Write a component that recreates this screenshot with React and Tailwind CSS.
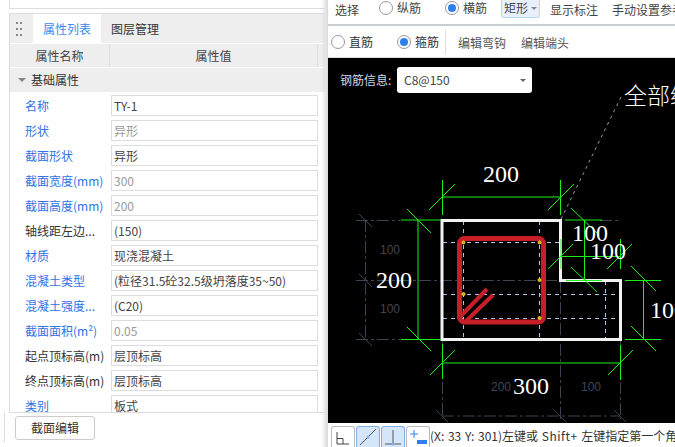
const rows = [
  { name: "名称", value: "TY-1", blue: true },
  { name: "形状", value: "异形", blue: true, muted: true },
  { name: "截面形状", value: "异形", blue: true },
  { name: "截面宽度(mm)", value: "300", blue: true, muted: true },
  { name: "截面高度(mm)", value: "200", blue: true, muted: true },
  { name: "轴线距左边...", value: "(150)" },
  { name: "材质", value: "现浇混凝土", blue: true },
  { name: "混凝土类型", value: "(粒径31.5砼32.5级坍落度35~50)", blue: true },
  { name: "混凝土强度...", value: "(C20)", blue: true },
  { name: "截面面积(m²)", value: "0.05", blue: true, muted: true },
  { name: "起点顶标高(m)", value: "层顶标高" },
  { name: "终点顶标高(m)", value: "层顶标高" },
  { name: "类别", value: "板式", blue: true },
];

function Radio({ label, checked, className = "" }) {
  return (
    <div className={`flex items-center gap-[4px] shrink-0 ${className}`}>
      <span className="w-[14px] h-[14px] rounded-full border border-[#999] bg-white flex items-center justify-center">
        {checked && <span className="w-[8px] h-[8px] rounded-full bg-[#2f80ed]" />}
      </span>
      <span>{label}</span>
    </div>
  );
}

function Grip() {
  return (
    <div className="grid grid-cols-2 gap-x-[2px] gap-y-[4px] ml-[6px] mr-[11px]">
      {[0, 1, 2, 3, 4, 5].map((i) => (
        <span key={i} className="w-[2px] h-[2px] bg-[#888]" />
      ))}
    </div>
  );
}

function PropertyPanel() {
  return (
    <div className="w-[328px] shrink-0 h-full flex flex-col bg-white relative">
      <div className="h-[9px] ml-[9px] mr-[3px] border-l border-b border-[#ddd] shrink-0" />
      <div className="h-[4px] shrink-0" />
      <div className="ml-[9px] mr-[3px] flex-1 min-h-0 border-l border-t border-b border-[#ddd] flex flex-col overflow-hidden">
        <div className="h-[29px] shrink-0 bg-[#eeeeef] flex items-center">
          <Grip />
          <div className="h-full w-[68px] bg-white text-[#3c8cf0] flex items-center justify-center">属性列表</div>
          <div className="ml-[10px] text-[#333]">图层管理</div>
        </div>
        <div className="h-[23px] shrink-0 mt-px bg-[#eeeeef] flex items-center text-[#444]">
          <div className="w-[100px] h-full border-r border-[#ddd] flex items-center justify-center">属性名称</div>
          <div className="w-[208px] h-full border-r border-[#ddd] flex items-center justify-center">属性值</div>
        </div>
        <div className="h-[24px] shrink-0 mt-px bg-[#eeeeef] flex items-center text-[#333]">
          <span className="ml-[8px] mr-[5px] w-0 h-0 border-x-[4px] border-x-transparent border-t-[4px] border-t-[#888]" />
          基础属性
        </div>
        <div className="flex flex-col pt-px">
          {rows.map((r) => (
            <div key={r.name} className="h-[25px] shrink-0 flex items-center">
              <div className={`w-[101px] pl-[15px] whitespace-nowrap ${r.blue ? "text-[#2e74e6]" : "text-[#333]"}`}>{r.name}</div>
              <div className={`w-[207px] h-[21px] border border-[#ddd] bg-white px-[2px] flex items-center whitespace-nowrap ${r.muted ? "text-[#999]" : "text-[#444]"}`}>
                {r.value}
              </div>
            </div>
          ))}
        </div>
      </div>
      <div className="h-[34px] shrink-0">
        <div className="h-[29px] ml-[4px] border-l border-[#ddd] pl-[10px] pt-[3px]">
          <button className="w-[80px] h-[24px] border border-[#ccc] rounded-[3px] bg-white text-[#333]">截面编辑</button>
        </div>
      </div>
      <div className="absolute top-0 right-0 bottom-0 w-[7px] bg-gradient-to-r from-transparent to-[#d8d8d8]" />
    </div>
  );
}

function Drawing() {
  const green = [
    "M442.5 198H560.5", "M442.5 181V216", "M560.5 181V216", "M429 211L455 185", "M548 211L574 185",
    "M418 221V340", "M401 221H441", "M401 340.5H441", "M407 210L431 234", "M407 328L431 352",
    "M565 221H602", "M584.5 221V281", "M566 281.5H602", "M571 209L597 234", "M571 268L597 293",
    "M561 257.5H620.5", "M561 240V270", "M620.5 240V270", "M548 270L573 245", "M607 270L632 245",
    "M643.5 281V340", "M625 281.5H661", "M625 340.5H661", "M631 267L656 292", "M631 327L656 352",
    "M442.5 364H620.5", "M442.5 345V380", "M620.5 346V381", "M430 376L455 351", "M608 376L633 351",
  ];
  const axes = [
    "M356 221.5H400", "M600 221.5H620", "M356 281.5H620", "M356 340.5H400", "M365.5 221V340",
    "M560.5 282V420", "M442.5 341V420", "M620.5 341V420", "M442 417H620",
  ];
  const grid = [
    "M463.5 222V340", "M539.5 222V340", "M605.5 282V340", "M443 243.5H560", "M443 295.5H620", "M443 319.5H620",
  ];
  const ticks = ["M359 215L372 228", "M359 275L372 288", "M359 334L372 347", "M436 411L449 424", "M554 411L567 424", "M614 411L627 424"];
  const dots = [[463.5, 243.5], [539.5, 243.5], [539.5, 281], [539.5, 319], [463.5, 295]];
  const dims = [[380, 255, "100"], [380, 314, "100"], [491, 392, "200"], [581, 392, "100"]];
  const labels = [[483, 183, "200"], [572, 242, "100"], [590, 260, "100"], [376, 289, "200"], [513, 395, "300"], [650, 319, "100"]];
  return (
    <svg className="absolute inset-0" width="347" height="364" viewBox="328 59 347 364" fill="none">
      <path d="M621 98L561 220" stroke="#999" strokeDasharray="3 4" />
      {axes.map((d) => <path key={d} d={d} stroke="#3a4350" strokeDasharray="12 3 3 3" />)}
      {ticks.map((d) => <path key={d} d={d} stroke="#3a4350" />)}
      {grid.map((d) => <path key={d} d={d} stroke="#a9c4e8" strokeDasharray="4 4" />)}
      <path d="M442 221.5H560.5V281.5H620.5V340.5H442Z" stroke="#f2f2f2" strokeWidth="3" />
      {green.map((d) => <path key={d} d={d} stroke="#18f018" />)}
      <rect x="459.5" y="239.5" width="84" height="83.5" rx="5" stroke="#c81e28" strokeWidth="5" />
      <path d="M458 320L487 290M465 323L493 296" stroke="#c81e28" strokeWidth="4" />
      {dots.map(([x, y]) => <circle key={`${x}-${y}`} cx={x} cy={y} r="1.5" fill="#c9a400" stroke="#f5d430" />)}
      {dims.map(([x, y, t]) => (
        <text key={`${x}-${y}`} x={x} y={y} fill="#3f4754" fontSize="12" fontFamily="Liberation Sans, sans-serif">{t}</text>
      ))}
      {labels.map(([x, y, t]) => (
        <text key={`${x}-${y}`} x={x} y={y} fill="#fff" fontSize="24" fontFamily="Liberation Serif, serif">{t}</text>
      ))}
      <text x="624" y="105" fill="#fff" fontSize="23" fontFamily="Liberation Serif, Noto Sans CJK SC, serif" fontWeight="300">全部纵筋</text>
    </svg>
  );
}

function StatusBtn({ active, children }) {
  return (
    <div className={`w-[24px] h-[21px] shrink-0 rounded-t-[3px] border border-b-0 ${active ? "bg-[#d6e6fa] border-[#7fb0ea]" : "bg-white border-[#bbb]"}`}>
      <svg width="22" height="20" viewBox="0 0 22 20" fill="none">{children}</svg>
    </div>
  );
}

function EditorPanel() {
  return (
    <div className="flex-1 min-w-0 h-full flex flex-col bg-white overflow-hidden">
      <div className="h-[24px] shrink-0 flex items-center whitespace-nowrap text-[#444] pb-[8px] overflow-hidden">
        <span className="ml-[7px] mt-[3px]">选择</span>
        <span className="w-px h-[20px] bg-[#ddd] ml-[12px] mr-[8px]" />
        <Radio label="纵筋" className="w-[66px]" />
        <Radio label="横筋" className="w-[48px]" checked />
        <span className="w-px h-[20px] bg-[#ddd] mr-[8px]" />
        <div className="w-[39px] h-[19px] mt-0 pt-[1px] shrink-0 rounded-b-[3px] border border-t-0 border-[#bcd6f5] bg-[#e8f1fb] flex items-center pl-[2px]">
          矩形
          <span className="ml-[3px] w-0 h-0 border-x-[3px] border-x-transparent border-t-[3px] border-t-[#888]" />
        </div>
        <span className="ml-[10px] mt-[3px]">显示标注</span>
        <span className="ml-[14px] mt-[3px]">手动设置参考点</span>
      </div>
      <div className="h-[2px] shrink-0 bg-[#c8cbd0]" />
      <div className="h-[32px] shrink-0 flex items-center whitespace-nowrap text-[#333] border-b border-[#ddd]">
        <Radio label="直筋" className="ml-[3px] w-[66px]" />
        <Radio label="箍筋" className="w-[48px]" checked />
        <span className="w-px h-[24px] bg-[#ddd]" />
        <span className="ml-[12px] mt-[3px] text-[#555]">编辑弯钩</span>
        <span className="ml-[15px] mt-[3px] text-[#555]">编辑端头</span>
      </div>
      <div className="relative h-[365px] shrink-0 bg-black overflow-hidden">
        <Drawing />
        <div className="relative flex items-center pl-[12px] pt-[9px]">
          <span className="w-[57px] text-[#cfd8e3] whitespace-nowrap">钢筋信息:</span>
          <div className="w-[135px] h-[26px] rounded-[3px] bg-white text-[#444] flex items-center justify-between pl-[7px] pr-[6px]">
            C8@150
            <span className="w-0 h-0 border-x-[3px] border-x-transparent border-t-[3px] border-t-[#666]" />
          </div>
        </div>
      </div>
      <div className="h-[24px] shrink-0 flex items-end pl-[3px] whitespace-nowrap text-[#333]">
        <StatusBtn>
          <path d="M5 5V17M5 11.5H11V17M5 17H17" stroke="#444" />
        </StatusBtn>
        <div className="w-px shrink-0" />
        <StatusBtn active>
          <path d="M3 18L19 2" stroke="#555" />
          <circle cx="11" cy="10" r="1.5" fill="#7fb0ea" />
        </StatusBtn>
        <div className="w-px shrink-0" />
        <StatusBtn active>
          <path d="M11 3V16M3 17H19" stroke="#555" />
          <circle cx="11" cy="17" r="1.5" fill="#7fb0ea" />
        </StatusBtn>
        <div className="w-px shrink-0" />
        <StatusBtn>
          <path d="M3 7H11M7 3V11" stroke="#2f80ed" />
          <rect x="10" y="13" width="10" height="4" fill="#2f80ed" />
        </StatusBtn>
        <span className="h-[22px] leading-[22px] [word-spacing:1px]">
          (X: 33 Y: 301)左键或 <span className="tracking-[0.5px]">Shift+</span> 左键指定第一个角点
        </span>
      </div>
    </div>
  );
}

export default function App() {
  return (
    <div className="w-[675px] h-[447px] flex overflow-hidden bg-white text-[12px] font-['Noto_Sans_CJK_SC','Noto_Sans',sans-serif]">
      <PropertyPanel />
      <EditorPanel />
    </div>
  );
}
